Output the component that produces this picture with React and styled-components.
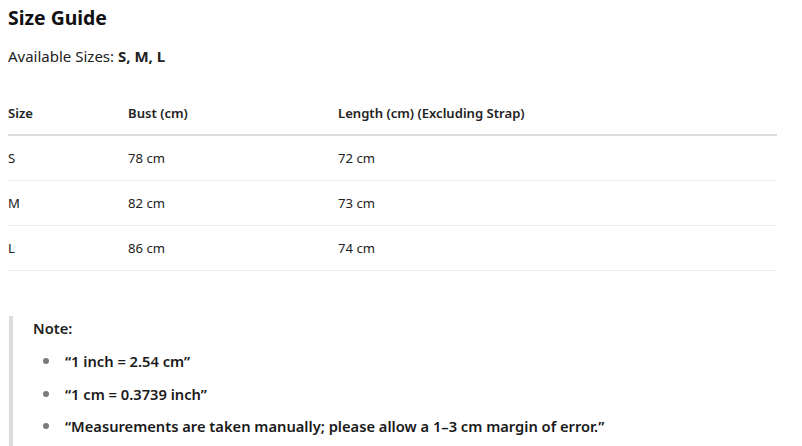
import React from "react";
import styled, { createGlobalStyle } from "styled-components";

const Global = createGlobalStyle`
  html, body { margin: 0; padding: 0; background: #fff; }
  body { font-family: "Noto Sans", "Open Sans", sans-serif; color: #1a1a1a; }
`;

const Page = styled.div`
  padding: 4px 25px 0 8px;
  display: flex;
  flex-direction: column;
`;

const Title = styled.h2`
  margin: 0;
  font-size: 19.4px;
  line-height: 28px;
  font-weight: 700;
  color: #111;
`;

const Available = styled.p`
  margin: 13px 0 0;
  font-size: 15px;
  line-height: 22px;
  color: #222;
  b { font-weight: 700; }
`;

const Table = styled.table`
  margin-top: 23px;
  width: 769px;
  border-collapse: collapse;
  font-size: 13.1px;
  color: #222;
`;

const Th = styled.th`
  text-align: left;
  font-weight: 600;
  padding: 13px 0 11px 0;
  line-height: 20px;
  width: ${(p) => p.$w || "auto"};
  border-bottom: 2px solid #dcdcdc;
`;

const Row = styled.tr`
  border-bottom: 1px solid #efefef;
`;

const Td = styled.td`
  padding: 12px 0 12px 0;
  line-height: 20px;
`;

const Note = styled.div`
  margin-top: 45px;
  border-left: 4px solid #dcdcdc;
  padding: 0 0 10px 20px;
  margin-left: 1px;
`;

const NoteTitle = styled.div`
  font-size: 14.7px;
  line-height: 24px;
  font-weight: 600;
  color: #222;
`;

const List = styled.ul`
  margin: 9px 0 0;
  padding: 0;
  list-style: none;
  display: flex;
  flex-direction: column;
  gap: 8.5px;
`;

const Item = styled.li`
  display: flex;
  align-items: center;
  gap: 16px;
  padding-left: 10px;
  font-size: 14.7px;
  line-height: 24px;
  font-weight: 600;
  color: #1a1a1a;
`;

const Bullet = styled.span`
  width: 6px;
  height: 6px;
  border-radius: 50%;
  background: #7a7a7a;
  flex: none;
`;

const rows = [
  ["S", "78 cm", "72 cm"],
  ["M", "82 cm", "73 cm"],
  ["L", "86 cm", "74 cm"],
];

const notes = [
  "“1 inch = 2.54 cm”",
  "“1 cm = 0.3739 inch”",
  "“Measurements are taken manually; please allow a 1–3 cm margin of error.”",
];

export default function App() {
  return (
    <Page>
      <Global />
      <Title>Size Guide</Title>
      <Available>
        Available Sizes: <b>S, M, L</b>
      </Available>
      <Table>
        <thead>
          <tr>
            <Th $w="120px">Size</Th>
            <Th $w="210px">Bust (cm)</Th>
            <Th>Length (cm) (Excluding Strap)</Th>
          </tr>
        </thead>
        <tbody>
          {rows.map((r) => (
            <Row key={r[0]}>
              {r.map((c, i) => (
                <Td key={i}>{c}</Td>
              ))}
            </Row>
          ))}
        </tbody>
      </Table>
      <Note>
        <NoteTitle>Note:</NoteTitle>
        <List>
          {notes.map((n) => (
            <Item key={n}>
              <Bullet />
              <span>{n}</span>
            </Item>
          ))}
        </List>
      </Note>
    </Page>
  );
}
